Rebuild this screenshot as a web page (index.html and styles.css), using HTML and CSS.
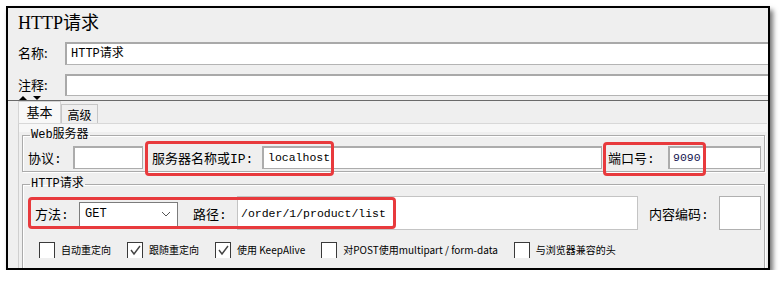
FILE: index.html
```html
<!DOCTYPE html>
<html lang="zh-CN">
<head>
  <meta charset="UTF-8">
  <title>HTTP请求</title>
  <link rel="stylesheet" href="styles.css">
</head>
<body>
  <div class="janela">
    <h1 class="titulo">HTTP请求</h1>

    <div class="linha">
      <span class="rotulo">名称:</span>
      <div class="campo">HTTP请求</div>
    </div>
    <div class="linha comentario">
      <span class="rotulo">注释:</span>
      <div class="campo"></div>
    </div>

    <div class="divisor">
      <span class="seta cima"></span>
      <span class="seta baixo"></span>
    </div>

    <div class="abas">
      <span class="aba ativa">基本</span>
      <span class="aba">高级</span>
    </div>

    <div class="painel">
      <fieldset class="grupo">
        <legend>Web服务器</legend>
        <div class="linha-grupo">
          <span class="rotulo-grupo protocolo">协议:</span>
          <div class="campo-grupo campo-protocolo"></div>
          <span class="rotulo-grupo servidor">服务器名称或IP:</span>
          <div class="campo-grupo campo-servidor">localhost</div>
          <span class="rotulo-grupo porta">端口号:</span>
          <div class="campo-grupo campo-porta">9090</div>
        </div>
      </fieldset>

      <fieldset class="grupo requisicao">
        <legend>HTTP请求</legend>
        <div class="linha-grupo alta">
          <span class="rotulo-grupo metodo">方法:</span>
          <div class="selecao">
            <span>GET</span>
            <svg width="10" height="6" viewBox="0 0 10 6"><polyline points="1,1 5,5 9,1" fill="none" stroke="#555" stroke-width="1"/></svg>
          </div>
          <span class="rotulo-grupo caminho">路径:</span>
          <div class="campo-grupo campo-caminho">/order/1/product/list</div>
          <span class="rotulo-grupo codificacao">内容编码:</span>
          <div class="campo-grupo campo-codificacao"></div>
        </div>

        <div class="opcoes">
          <label class="opcao"><span class="caixa"></span>自动重定向</label>
          <label class="opcao"><span class="caixa"><svg width="14" height="14" viewBox="0 0 14 14"><polyline points="3,7 6,11 12,3" fill="none" stroke="#444" stroke-width="1.4"/></svg></span>跟随重定向</label>
          <label class="opcao"><span class="caixa"><svg width="14" height="14" viewBox="0 0 14 14"><polyline points="3,7 6,11 12,3" fill="none" stroke="#444" stroke-width="1.4"/></svg></span>使用 KeepAlive</label>
          <label class="opcao"><span class="caixa"></span>对POST使用multipart / form-data</label>
          <label class="opcao"><span class="caixa"></span>与浏览器兼容的头</label>
        </div>
      </fieldset>
    </div>

    <!-- marcações vermelhas por cima do formulário -->
    <div class="destaque" style="left: 137px; top: 133px; width: 189px; height: 35px;"></div>
    <div class="destaque" style="left: 595px; top: 134px; width: 103px; height: 34px;"></div>
    <div class="destaque" style="left: 20px; top: 189px; width: 368px; height: 32px;"></div>
  </div>
</body>
</html>
```

FILE: styles.css
```css
body { margin: 0; background: #fff; font-family: 'Noto Sans CJK SC', 'Liberation Sans', sans-serif; color: #000; }

.janela {
  position: relative;
  box-sizing: border-box;
  width: 764px;
  height: 264px;
  margin: 6px 0 0 6px;
  border: 2px solid #000;
  background: #efefef;
  box-shadow: 3px 4px 5px rgba(0,0,0,0.55);
  overflow: hidden;
  display: flex;
  flex-direction: column;
}
.titulo {
  margin: 0;
  height: 30px;
  line-height: 30px;
  padding-left: 10px;
  font-family: 'Liberation Serif', 'Noto Sans CJK SC', serif;
  font-size: 18px;
  font-weight: normal;
}

.linha {
  display: flex;
  height: 23px;
  margin-top: 4px;
}
.linha.comentario { margin-top: 9px; height: 22px; }
.rotulo {
  width: 57px;
  box-sizing: border-box;
  padding-left: 10px;
  font-size: 13px;
  line-height: 22px;
}
.campo {
  flex: 1;
  background: #fff;
  border-top: 2px solid #a9a9a9;
  border-left: 2px solid #a9a9a9;
  border-bottom: 1px solid #b4b4b4;
  font-family: 'Liberation Mono', 'Noto Sans CJK SC', monospace;
  font-size: 12px;
  line-height: 20px;
  padding-left: 4px;
}

.divisor {
  height: 4px;
  border-bottom: 1px solid #6a6a6a;
  display: flex;
  align-items: flex-start;
  gap: 3px;
  padding-left: 11px;
}
.seta { width: 0; height: 0; border-left: 4px solid transparent; border-right: 4px solid transparent; }
.seta.cima { border-bottom: 4px solid #000; }
.seta.baixo { border-top: 4px solid #000; margin-left: 3px; }

.abas {
  display: flex;
  align-items: flex-end;
  height: 24px;
  padding-left: 10px;
}
.aba {
  box-sizing: border-box;
  height: 19px;
  width: 37px;
  border: 1px solid #c6c6c6;
  border-bottom: none;
  font-size: 12px;
  line-height: 19px;
  text-align: center;
}
.aba.ativa {
  height: 22px;
  width: 43px;
  background: #f8f8f8;
  border-color: #d4d4d4;
  font-size: 13px;
  line-height: 20px;
}

.painel {
  flex: 1;
  margin: 0 1px 0 10px;
  border-left: 1px solid #cfcfcf;
  border-top: 1px solid #d8d8d8;
  background: linear-gradient(#f7f7f7 0, #f7f7f7 8px, #efefef 8px);
  padding: 4px 2px 0 3px;
}

.grupo {
  margin: 0;
  padding: 2px 3px 2px 5px;
  border: 1px solid #ababab;
  box-shadow: inset 1px 1px 0 #fff, 1px 1px 0 #fff;
  background: #efefef;
}
.grupo legend {
  padding: 0 1px;
  margin-left: 2px;
  font-family: 'Liberation Mono', 'Noto Sans CJK SC', monospace;
  font-size: 12px;
  line-height: 14px;
}
.grupo.requisicao { margin-top: 5px; padding-top: 4px; padding-bottom: 20px; }

.linha-grupo {
  display: flex;
  align-items: center;
  height: 24px;
  margin-top: 1px;
}
.linha-grupo.alta { height: 34px; padding-left: 7px; }
.rotulo-grupo {
  font-size: 13px;
  font-family: 'Liberation Mono', 'Noto Sans CJK SC', monospace;
  white-space: nowrap;
}
.rotulo-grupo.protocolo { width: 45px; }
.rotulo-grupo.servidor { width: 110px; margin-left: 9px; }
.rotulo-grupo.porta { width: 60px; margin-left: 6px; }
.rotulo-grupo.metodo { width: 44px; }
.rotulo-grupo.caminho { width: 44px; margin-left: 15px; }
.rotulo-grupo.codificacao { width: 70px; margin-left: 11px; }

.campo-grupo {
  box-sizing: border-box;
  height: 23px;
  background: #fff;
  border: 2px solid #acacac;
  border-right-width: 1px;
  border-bottom-width: 1px;
  font-family: 'Liberation Mono', monospace;
  font-size: 11.5px;
  line-height: 20px;
  padding-left: 4px;
}
.campo-protocolo { width: 70px; }
.campo-servidor { flex: 1; }
.campo-porta { width: 93px; color: #141450; padding-left: 3px; }
.campo-caminho { flex: 1; height: 34px; line-height: 33px; border: 1px solid #c4c4c4; padding-left: 3px; }
.campo-codificacao { width: 42px; height: 34px; border: 1px solid #b0b0b0; }

.selecao {
  box-sizing: border-box;
  width: 99px;
  height: 25px;
  margin-top: 2px;
  background: #fff;
  border: 1px solid #7c7c7c;
  display: flex;
  align-items: center;
  justify-content: space-between;
  padding: 0 6px 0 5px;
  font-family: 'Liberation Mono', monospace;
  font-size: 12px;
}

.opcoes {
  display: flex;
  height: 16px;
  margin-top: 12px;
  padding-left: 11px;
  overflow: hidden;
}
.opcao {
  display: flex;
  align-items: flex-start;
  margin-right: 16px;
  font-size: 10px;
  line-height: 16px;
  white-space: nowrap;
}
.caixa {
  box-sizing: border-box;
  width: 16px;
  height: 18px;
  margin-right: 6px;
  background: #fff;
  border: 1px solid #3a3a3a;
  display: flex;
  align-items: flex-start;
}

.destaque {
  position: absolute;
  box-sizing: border-box;
  border: 3px solid #e83a3d;
  border-radius: 4px;
}
```
